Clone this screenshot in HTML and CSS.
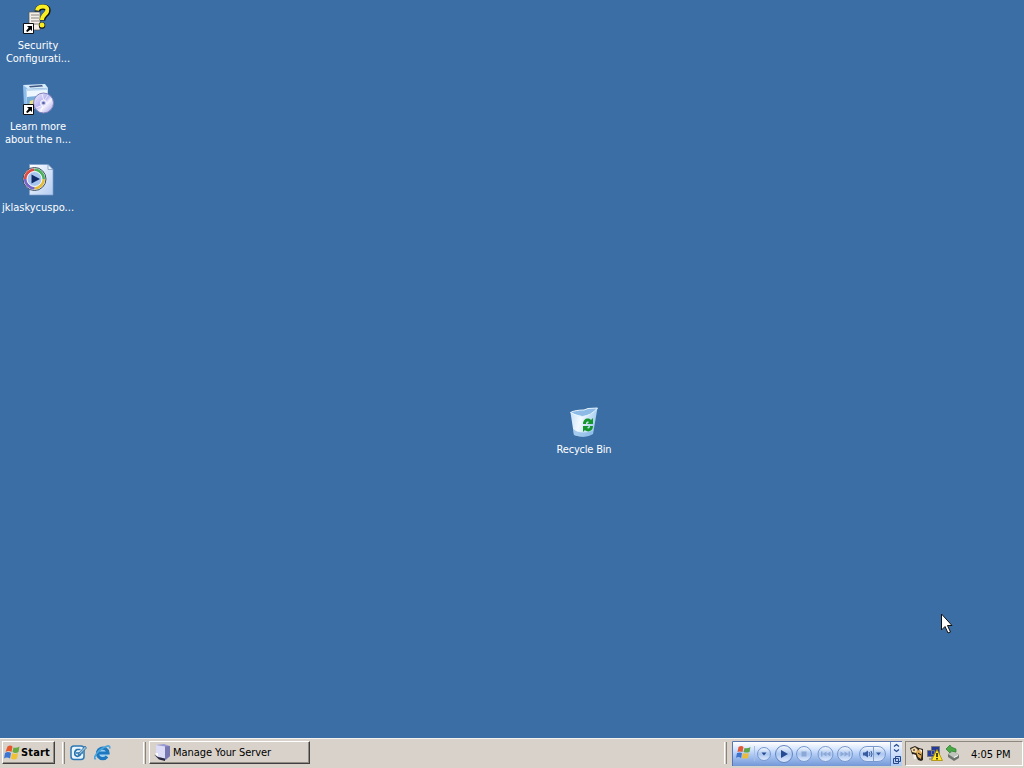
FILE: index.html
```
<!DOCTYPE html>
<html lang="en">
<head>
    <meta charset="UTF-8">
    <title>Desktop</title>
    <link rel="stylesheet" href="styles.css">
</head>
<body>
    <div class="desktop">
        <div class="shortcut security">
            <svg class="icon" width="32" height="32" viewBox="0 0 32 32">
                <path d="M7 9h11v18H7z" fill="#f4f0e8" stroke="#555" stroke-width=".7"/>
                <path d="M9 12h8M9 15h8M9 18h8M9 21h8" stroke="#8a8480"/>
                <path d="M15.500 8.500C15.500 5 18 4 21 4C25 4 26.500 6 25.500 9C24.500 12 20.500 12.500 20.500 17.500" fill="none" stroke="#111" stroke-width="5.600"/>
                <circle cx="20" cy="22.500" r="3.200" fill="#111"/>
                <path d="M15 7.500C15.500 4.500 17.500 3.500 21 3.500C25 3.500 26 5.500 25 8.500C24 11.500 20 12 20 17" fill="none" stroke="#f8ee22" stroke-width="4"/>
                <circle cx="20" cy="22" r="2.500" fill="#f8ee22"/>
                <path d="M1.500 20.500h10v10h-10z" fill="#fff" stroke="#111"/>
                <path d="M5 23h5v5l-1.600-1.600L5.500 29 4 28l2.700-3.300z" fill="#000"/>
            </svg>
            <div class="label">Security<br>Configurati...</div>
        </div>
        <div class="shortcut learn">
            <svg class="icon" width="32" height="32" viewBox="0 0 32 32">
                <defs>
                    <linearGradient id="disc" x1="0" y1="0" x2="1" y2="1">
                        <stop offset="0" stop-color="#f2efff"/>
                        <stop offset=".45" stop-color="#b6b2ee"/>
                        <stop offset=".6" stop-color="#f5f2ff"/>
                        <stop offset="1" stop-color="#9c9be0"/>
                    </linearGradient>
                </defs>
                <path d="M1 2l5 3v22l-4-4z" fill="#8fbde9"/>
                <path d="M1 2l22-1 3 4-20 1z" fill="#d8ecfc"/>
                <path d="M7 3l13-1 1 1.500-13 1z" fill="#435a84"/>
                <path d="M4 6l22-1v18L5 27z" fill="#bddaf2"/>
                <path d="M5 8l20-1v5L5 14z" fill="#eef7ff"/>
                <path d="M5 14l12-1-4 12-8 2z" fill="#79aeda"/>
                <path d="M8 18l6-2-2 5-5 2z" fill="#e4df86"/>
                <circle cx="21.500" cy="20" r="10" fill="url(#disc)" stroke="#8584bd"/>
                <path d="M20 11l2 7 4-6M19 29l2-7-7 3" stroke="#fff" opacity=".7" fill="none"/>
                <circle cx="21.500" cy="20" r="3" fill="#c8c5ed" stroke="#f8f7ff"/>
                <circle cx="21.500" cy="20" r="1.300" fill="#5361a3"/>
                <path d="M1.500 21.500h10v10h-10z" fill="#fff" stroke="#111"/>
                <path d="M5 24h5v5l-1.600-1.600L5.500 30 4 29l2.700-3.300z" fill="#000"/>
            </svg>
            <div class="label">Learn more<br>about the n...</div>
        </div>
        <div class="shortcut media">
            <svg class="icon" width="32" height="32" viewBox="0 0 32 32">
                <defs>
                    <linearGradient id="paper" x1="0" y1="0" x2="1" y2="1">
                        <stop offset="0" stop-color="#fff"/>
                        <stop offset="1" stop-color="#b2ccf1"/>
                    </linearGradient>
                </defs>
                <path d="M7.500.5H26l5 5V31H7.500z" fill="url(#paper)" stroke="#7e9ccb" stroke-width=".7"/>
                <path d="M26 .5v5h5z" fill="#ecf3ff" stroke="#7190bf" stroke-width=".7"/>
                <circle cx="12.500" cy="15" r="11.500" fill="#edf1f4" stroke="#3c4d60"/>
                <g fill="none" stroke-width="3.200">
                    <path d="M3.500 15A9 9 0 0 1 12.500 6" stroke="#df4a45"/>
                    <path d="M12.500 6A9 9 0 0 1 21.500 15" stroke="#4bb35c"/>
                    <path d="M21.500 15A9 9 0 0 1 12.500 24" stroke="#e7bd38"/>
                    <path d="M12.500 24A9 9 0 0 1 3.500 15" stroke="#7664c8"/>
                </g>
                <circle cx="12.500" cy="15" r="7.500" fill="#a9c6f1" stroke="#f8fbff"/>
                <path d="M9.500 10.500l8.500 4.500-8.500 4.500z" fill="#102b68"/>
            </svg>
            <div class="label">jklaskycuspo...</div>
        </div>
        <div class="shortcut recycle">
            <svg class="icon" width="32" height="32" viewBox="0 0 32 32">
                <defs>
                    <linearGradient id="bin" x1="0" y1="0" x2="1" y2=".3">
                        <stop offset="0" stop-color="#c3def6"/>
                        <stop offset=".45" stop-color="#f2f9ff"/>
                        <stop offset="1" stop-color="#a2cbee"/>
                    </linearGradient>
                </defs>
                <path d="M2.500 6.500Q13 9 29.500 2L25 28Q17 33 6 29z" fill="url(#bin)"/>
                <path d="M2.500 6.500Q7 4 16 4l4-1.500 9.500-.5-6 6-9 2.500z" fill="#8dbbe6"/>
                <path d="M2.500 6.500q6 4 12 4 9-1 15-8.500M2.500 6.500Q7 4 16 4l4-1.500 9.500-.5" fill="none" stroke="#e6f4ff"/>
                <path d="M5 23q7 6 20 2l-.5 3Q17 33 6 29z" fill="#7eb2e3" opacity=".65"/>
                <path d="M15 18c0-5 5-7 8-4l2-2v6h-6l2-2c-2-1-3 0-3 2zM25 20c0 5-5 7-8 4l-2 2v-6h6l-2 2c2 1 3 0 3-2z" fill="#15962d"/>
            </svg>
            <div class="label">Recycle Bin</div>
        </div>
        <svg class="cursor" width="14" height="22" viewBox="0 0 14 22">
            <path d="M1.500 1v16l3.500-3.500 3 6.500 2.500-1-3-6.500h4.500z" fill="#fff" stroke="#111"/>
        </svg>
    </div>

    <div class="taskbar">
        <div class="start">
            <svg width="17" height="16" viewBox="0 0 17 16">
                <path d="M3.500 1.500q3-2 5 0L7.500 7q-3-2-6 0z" fill="#e4582c"/>
                <path d="M9.500 2.500q3 1 6-1l-1 5.500q-3 2-6 0z" fill="#67aa3d"/>
                <path d="M1 8q3-2 6 0l-1 5.500q-3-2-6 0z" fill="#3d75d2"/>
                <path d="M8 8q3 2 6 0l-1 5.500q-3 2-6 0z" fill="#f0c133"/>
            </svg>
            <span class="start-text">Start</span>
        </div>
        <div class="grip grip-quick"></div>
        <div class="quick">
            <svg width="17" height="17" viewBox="0 0 17 17">
                <rect x="1" y="2" width="13" height="13.500" rx="3" fill="#e8f5ff" stroke="#2d78b4" stroke-width="1.500"/>
                <path d="M10.500 5.500H7Q4 7 5 11q3 3 6-1M6 9h6V6" fill="none" stroke="#2574b1" stroke-width="1.700"/>
                <path d="M9 9l6-7 1.500 2-6 6-2.500 1z" fill="#8fc0df" stroke="#285e89" stroke-width=".7"/>
            </svg>
            <svg width="17" height="17" viewBox="0 0 17 17">
                <circle cx="8.500" cy="9" r="6" fill="#9fd2f0"/>
                <path d="M13 12.500A5.300 5.300 0 1 1 14 9H5" fill="none" stroke="#1d78bf" stroke-width="3.200"/>
                <path d="M2 14.500C-1 16 1 10 6 6S17 0 15.500 4.500" fill="none" stroke="#4ba4dc" stroke-width="1.700"/>
            </svg>
        </div>
        <div class="grip grip-tasks"></div>
        <div class="task">
            <svg width="17" height="17" viewBox="0 0 17 17">
                <path d="M2 1l8-1 6 2v10l-4 4-10-4z" fill="#9b9bd2"/>
                <path d="M2 1l9 1.500V15l-9-3z" fill="#dcdcf6"/>
                <path d="M11 2.500l5-.5v10l-5 4z" fill="#7777b2"/>
                <path d="M0 10.500l4 2.500 7 1.500V17L5 15.500z" fill="#282941"/>
                <path d="M1 9.500l3-.5v3.500z" fill="#fff"/>
            </svg>
            <span class="task-text">Manage Your Server</span>
        </div>
        <div class="grip grip-player"></div>
        <div class="player">
            <svg width="170" height="25" viewBox="0 0 170 25">
                <defs>
                    <linearGradient id="button" x1="0" y1="0" x2="0" y2="1">
                        <stop offset="0" stop-color="#f6faff"/>
                        <stop offset=".5" stop-color="#abc6ef"/>
                        <stop offset="1" stop-color="#dfeaff"/>
                    </linearGradient>
                    <linearGradient id="side" x1="0" y1="0" x2="0" y2="1">
                        <stop offset="0" stop-color="#eef5ff"/>
                        <stop offset="1" stop-color="#aec8f2"/>
                    </linearGradient>
                </defs>
                <path d="M6.500 6q3-2 5 0l-1 5q-3-1-5 0z" fill="#e15a35"/>
                <path d="M12.500 7q3 1 6-1l-1 5q-3 1-6 0z" fill="#5da44a"/>
                <path d="M5 12q3-1 5 0l-1 5q-3-2-5 0z" fill="#3f72cb"/>
                <path d="M11 12q3 1 6 0l-1 5q-3 1-6 0z" fill="#eabc3c"/>
                <path d="M22.500 5v15" stroke="#a8bfe4"/>
                <g fill="url(#button)" stroke="#7799cf">
                    <circle cx="32" cy="13" r="6.500"/>
                    <circle cx="52" cy="13" r="8.500" stroke="#5f85c2"/>
                    <circle cx="72" cy="13" r="7.500"/>
                    <circle cx="93.500" cy="13" r="7.500"/>
                    <circle cx="113" cy="13" r="7.500"/>
                    <rect x="127.500" y="5.500" width="26" height="15" rx="7.500"/>
                </g>
                <path d="M29.500 11.500h5l-2.500 3zM49 9l7 4-7 4z" fill="#254b91"/>
                <path d="M69.500 10.500h5v5h-5zM89 10.500h1.500v5H89zM94.500 10.500v5l-4-2.500zM98.500 10.500v5l-4-2.500zM108.500 10.500l4 2.500-4 2.500zM112.500 10.500l4 2.500-4 2.500zM116.500 10.500h1.500v5h-1.500z" fill="#8ca8d7"/>
                <path d="M131 11.500h2l3-2v7l-3-2h-2zM144 11.500h5l-2.500 3z" fill="#385c9f"/>
                <path d="M137 11q2 2 0 4M139 10q2 3 0 6" fill="none" stroke="#385c9f"/>
                <path d="M141.500 6v14" stroke="#7d9dcd"/>
                <path d="M159 1h11v24h-11z" fill="url(#side)"/>
                <path d="M158.500 1v24" stroke="#6f91cf"/>
                <path d="M162 5.500l2.500-2 2.500 2M162 8.500l2.500 2 2.500-2" fill="none" stroke="#25488d" stroke-width="1.300"/>
                <path d="M163.500 15.500h5v5h-5zM161.500 17.500h5v5h-5z" fill="#b8cef3" stroke="#25488d"/>
                <path d="M.5 25V.5H170" fill="none" stroke="#5875b0"/>
            </svg>
        </div>
        <div class="tray">
            <svg width="16" height="17" viewBox="0 0 16 17">
                <path d="M1 3l5-2 4 2 4 1v11l-2 1-3-1-2-4-4-2z" fill="#2c241d"/>
                <path d="M2 4l4-2 3 3-2 3-4-1z" fill="#f3d8a5"/>
                <path d="M7 7l4-3 2 3-1 7-3-2z" fill="#e2ad56"/>
                <path d="M4 9l3 1v4H5zM10 4l3 1v3z" fill="#f6f1e8"/>
                <path d="M4 5h2M9 8l3 2" stroke="#111"/>
            </svg>
            <svg width="18" height="17" viewBox="0 0 18 17">
                <path d="M5.500 1.500h8v8h-8zM1.500 5.500h7v6h-7z" fill="#243b9c" stroke="#777"/>
                <path d="M3 14h5M6 11v3" stroke="#777"/>
                <path d="M11 4.500l5.500 11H5.500z" fill="#ffe32d" stroke="#a58a00" stroke-width=".8"/>
                <path d="M11 8v4M11 13v1.500" stroke="#111" stroke-width="1.500"/>
            </svg>
            <svg width="16" height="17" viewBox="0 0 16 17">
                <path d="M3 9l6-3 5 4v3l-5 3-6-4z" fill="#6e746e"/>
                <path d="M3 9l6-3 5 4-5 3z" fill="#bfc4bd"/>
                <path d="M9 12.500l4-2" stroke="#fff"/>
                <path d="M1 4l4-4 1 2 5 2v3L6 6 5 8z" fill="#4aaa45" stroke="#287b2a" stroke-width=".7"/>
            </svg>
            <span class="clock">4:05 PM</span>
        </div>
    </div>
</body>
</html>
```

FILE: styles.css
```
body {
    margin: 0;
    width: 1024px;
    height: 768px;
    overflow: hidden;
    display: flex;
    flex-direction: column;
    background-color: #3b6ea5;
    font-family: "DejaVu Sans Condensed", "DejaVu Sans", sans-serif;
    font-size: 11px;
}
svg {
    display: block;
    flex: none;
}
.desktop {
    position: relative;
    flex: 1;
}
/* icons sit freely on the desktop */
.shortcut {
    position: absolute;
    width: 76px;
    display: flex;
    flex-direction: column;
    align-items: center;
}
.security {
    left: 0;
    top: 3px;
}
.learn {
    left: 0;
    top: 83px;
}
.media {
    left: 0;
    top: 164px;
}
.recycle {
    left: 546px;
    top: 406px;
}
.label {
    margin-top: 4px;
    color: #ffffff;
    line-height: 13px;
    text-align: center;
    white-space: nowrap;
}
.learn .label,
.media .label {
    margin-top: 5px;
}
.learn .label {
    letter-spacing: -0.05px;
}
.recycle .label {
    margin-top: 5px;
    letter-spacing: -0.2px;
}
.cursor {
    position: absolute;
    left: 940px;
    top: 613px;
}
.taskbar {
    height: 30px;
    box-sizing: border-box;
    display: flex;
    align-items: flex-start;
    padding: 2px 1px 0 2px;
    background-color: #d8d2ca;
    border-top: 1px solid #f5f3ef;
}
.start {
    width: 53px;
    height: 23px;
    box-sizing: border-box;
    display: flex;
    align-items: center;
    padding-left: 1px;
    border: 1px solid;
    border-color: #ffffff #404040 #404040 #ffffff;
    box-shadow: inset -1px -1px #918d85;
}
.start-text {
    font-weight: bold;
    letter-spacing: 0.15px;
}
.grip {
    width: 3px;
    height: 22px;
    margin-top: 1px;
    box-sizing: border-box;
    border-left: 1px solid #ffffff;
    border-right: 1px solid #88847c;
}
.grip-quick {
    margin-left: 7px;
}
.quick {
    display: flex;
    gap: 7px;
    padding: 3px 0 0 5px;
}
.grip-tasks {
    margin-left: 32px;
}
.task {
    width: 161px;
    height: 23px;
    box-sizing: border-box;
    margin-left: 3px;
    padding-left: 4px;
    display: flex;
    align-items: center;
    gap: 2px;
    border: 1px solid;
    border-color: #ffffff #404040 #404040 #ffffff;
    box-shadow: inset -1px -1px #918d85;
}
.task-text {
    letter-spacing: -0.05px;
}
.grip-player {
    margin-left: auto;
}
.player {
    width: 170px;
    height: 25px;
    margin-left: 5px;
    background: linear-gradient(#ffffff 1px, #d6e5ff 8px, #a6c3f1 15px, #7398d8 25px);
}
.tray {
    width: 118px;
    height: 25px;
    box-sizing: border-box;
    margin-left: 3px;
    padding-left: 3px;
    display: flex;
    align-items: center;
    gap: 1px;
    border: 1px solid;
    border-color: #8c8880 #ffffff #ffffff #8c8880;
}
.clock {
    margin: 2px 0 0 9px;
    letter-spacing: -0.05px;
    white-space: nowrap;
}
```
